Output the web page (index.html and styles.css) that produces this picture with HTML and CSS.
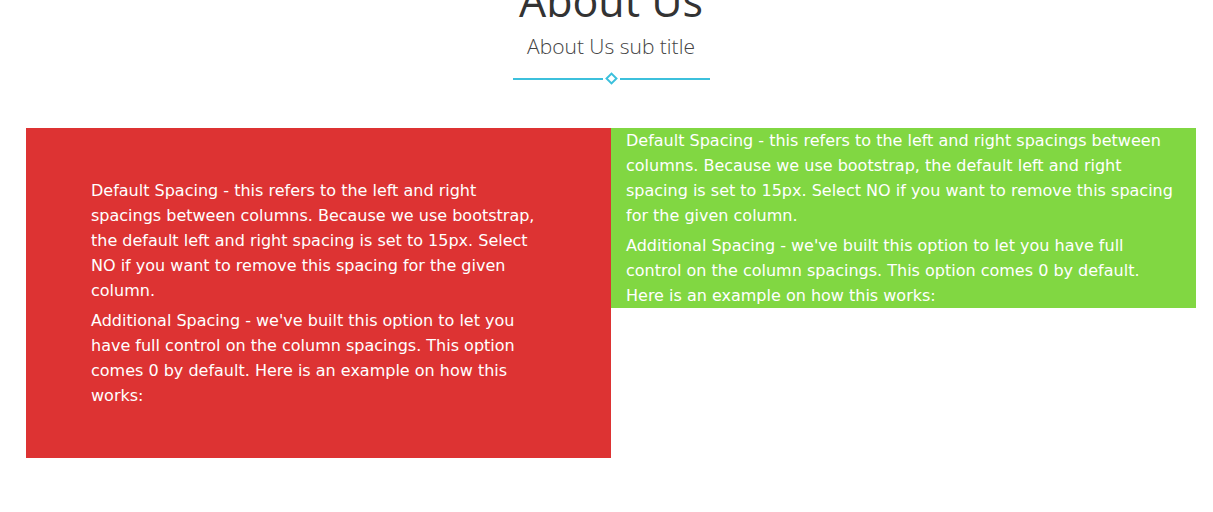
FILE: index.html
```html
<!DOCTYPE html>
<html>
<head>
<meta charset="utf-8">
<link rel="stylesheet" href="styles.css">
</head>
<body>
<div class="page">
  <header class="heading">
    <h1 class="title">About Us</h1>
    <p class="subtitle">About Us sub title</p>
    <div class="divider"><span class="line"></span><span class="diamond"></span><span class="line"></span></div>
  </header>
  <div class="row">
    <div class="col col-red">
      <p>Default Spacing - this refers to the left and right spacings between columns. Because we use bootstrap, the default left and right spacing is set to 15px. Select NO if you want to remove this spacing for the given column.</p>
      <p>Additional Spacing - we've built this option to let you have full control on the column spacings. This option comes 0 by default. Here is an example on how this works:</p>
    </div>
    <div class="col col-green">
      <p>Default Spacing - this refers to the left and right spacings between columns. Because we use bootstrap, the default left and right spacing is set to 15px. Select NO if you want to remove this spacing for the given column.</p>
      <p>Additional Spacing - we've built this option to let you have full control on the column spacings. This option comes 0 by default. Here is an example on how this works:</p>
    </div>
  </div>
</div>
</body>
</html>
```
FILE: styles.css
```css
html, body {
  margin: 0;
  padding: 0;
  background: #fff;
}
.page {
  width: 1170px;
  margin-left: 26px;
  font-family: "DejaVu Sans", Verdana, sans-serif;
}
.heading {
  display: flex;
  flex-direction: column;
  align-items: center;
  margin-top: -27px;
  height: 155px;
}
.title {
  font-family: "Open Sans", sans-serif;
  font-weight: 400;
  font-size: 43px;
  line-height: 56px;
  color: #333;
  margin: 0;
}
.subtitle {
  font-family: "Open Sans", sans-serif;
  font-weight: 300;
  font-size: 21px;
  line-height: 24px;
  color: #444;
  margin: 5px 0 0;
}
.divider {
  display: flex;
  align-items: center;
  gap: 4px;
  margin-top: 16px;
}
.line {
  display: block;
  width: 90px;
  height: 2px;
  background: #3cc0dc;
}
.diamond {
  display: block;
  width: 5px;
  height: 5px;
  border: 2px solid #3cc0dc;
  transform: rotate(45deg);
}
.row {
  display: flex;
  align-items: flex-start;
}
.col {
  width: 585px;
  box-sizing: border-box;
  color: #fff;
  font-size: 16px;
  line-height: 25px;
}
.col p {
  margin: 0 0 5px;
}
.col p:last-child {
  margin-bottom: 0;
}
.col-red {
  background: #dd3333;
  padding: 50px 65px;
}
.col-green {
  background: #81d742;
  padding: 0 15px;
}
```
